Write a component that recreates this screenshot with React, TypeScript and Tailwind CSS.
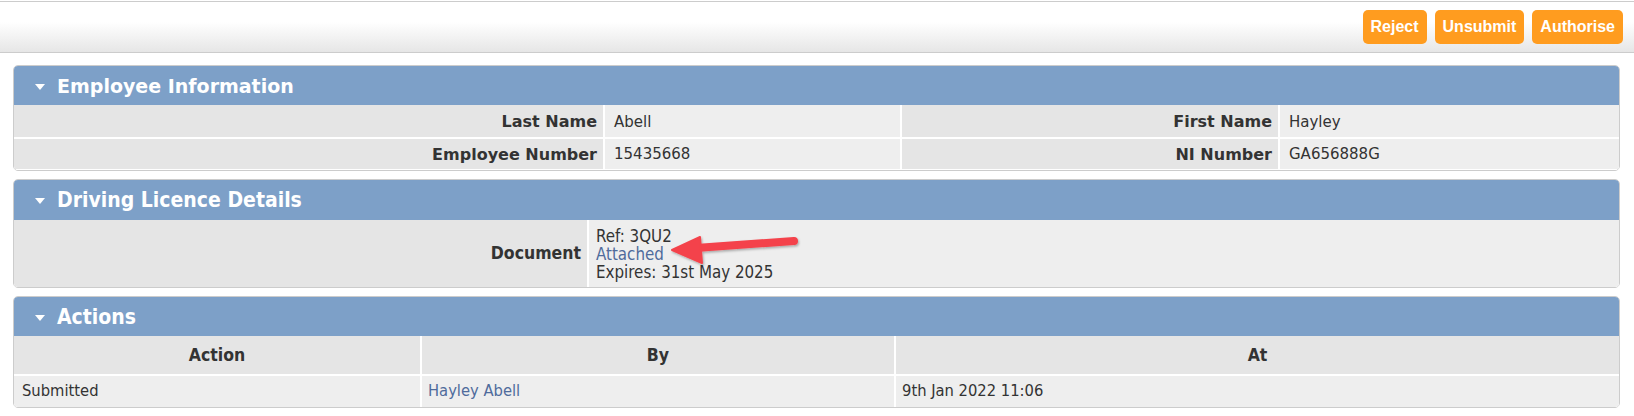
import React from "react";

const sans = "font-['DejaVu_Sans',Verdana,sans-serif]";
const cond = "font-['DejaVu_Sans_Condensed','DejaVu_Sans',sans-serif]";

function Caret() {
  return (
    <svg width="10" height="6" viewBox="0 0 10 6" className="shrink-0">
      <path d="M0 0 L10 0 L5 6 Z" fill="#ffffff" />
    </svg>
  );
}

function PanelHeader({title, condensed, tall}: { title: string; condensed?: boolean; tall?: boolean }) {
  return (
    <div
      className={`flex items-center gap-[12px] pl-[21px] pt-[2px] bg-[#7da0c8] text-white font-bold ${
        tall ? "h-[40px]" : "h-[39px]"
      } ${condensed ? `${cond} text-[21px]` : `${sans} text-[19px]`}`}
    >
      <Caret/>
      <span>{title}</span>
    </div>
  );
}

function Button({label}: { label: string }) {
  return (
    <button
      className="h-[34px] px-[8px] rounded-[5px] bg-[#ff9c1f] text-white font-bold text-[16px] font-['Liberation_Sans',Arial,sans-serif]">
      {label}
    </button>
  );
}

function Arrow() {
  return (
    <svg
      width="145"
      height="45"
      viewBox="0 0 145 45"
      className="absolute left-[660px] top-[225px] pointer-events-none"
    >
      <defs>
        <filter id="sh" x="-10%" y="-30%" width="120%" height="160%">
          <feDropShadow dx="1" dy="1.5" stdDeviation="1.2" floodColor="#000" floodOpacity="0.3"/>
        </filter>
      </defs>
      <g filter="url(#sh)">
        <path d="M134 16 L36 23" stroke="#f4434b" strokeWidth="8" strokeLinecap="round"/>
        <path d="M12 25 L40 12 L42 38 Z" fill="#f4434b" strokeLinejoin="round" stroke="#f4434b" strokeWidth="2"/>
      </g>
    </svg>
  );
}

export default function App() {
  return (
    <div className="relative w-[1634px] h-[416px] bg-white text-[#333333] overflow-hidden">
      {/* top toolbar */}
      <div
        className="h-[52px] mt-[1px] border-t border-b border-[#cccccc] bg-gradient-to-b from-white from-40% to-[#e6e6e6] flex items-start justify-end gap-[8px] pr-[11px] pt-[8px]">
        <Button label="Reject"/>
        <Button label="Unsubmit"/>
        <Button label="Authorise"/>
      </div>

      <div className="flex flex-col gap-[8px] ml-[13px] mr-[14px] mt-[12px]">
        {/* Employee information */}
        <div className="border border-[#cccccc] rounded-[5px] overflow-hidden bg-white">
          <PanelHeader title="Employee Information"/>
          <div
            className={`grid grid-cols-[589px_295px_376px_1fr] gap-[2px] bg-white pb-[1px] ${sans}`}>
            <div className="h-[32px] pt-[2px] bg-[#e5e5e5] font-bold text-[16px] flex items-center justify-end pr-[6px]">Last Name</div>
            <div className="h-[32px] pt-[2px] bg-[#eeeeee] text-[15px] flex items-center pl-[9px]">Abell</div>
            <div className="h-[32px] pt-[2px] bg-[#e5e5e5] font-bold text-[16px] flex items-center justify-end pr-[6px]">First Name</div>
            <div className="h-[32px] pt-[2px] bg-[#eeeeee] text-[15px] flex items-center pl-[9px]">Hayley</div>
            <div className="h-[30px] pt-[1px] bg-[#e5e5e5] font-bold text-[16px] flex items-center justify-end pr-[6px]">Employee Number</div>
            <div className="h-[30px] pt-[1px] bg-[#eeeeee] text-[15px] flex items-center pl-[9px]">15435668</div>
            <div className="h-[30px] pt-[1px] bg-[#e5e5e5] font-bold text-[16px] flex items-center justify-end pr-[6px]">NI Number</div>
            <div className="h-[30px] pt-[1px] bg-[#eeeeee] text-[15px] flex items-center pl-[9px]">GA656888G</div>
          </div>
        </div>

        {/* Driving licence */}
        <div className="border border-[#cccccc] rounded-[5px] overflow-hidden bg-white">
          <PanelHeader title="Driving Licence Details" condensed tall/>
          <div className={`grid grid-cols-[573px_1fr] gap-[2px] bg-white ${cond}`}>
            <div className="h-[67px] bg-[#e5e5e5] font-bold text-[17.5px] flex items-center justify-end pr-[6px]">Document</div>
            <div className="h-[67px] bg-[#eeeeee] text-[16.8px] leading-[18px] flex flex-col justify-center pl-[7px]">
              <span>Ref: 3QU2</span>
              <a className="text-[#4f6b9c]">Attached</a>
              <span>Expires: 31st May 2025</span>
            </div>
          </div>
        </div>

        {/* Actions */}
        <div className="border border-[#cccccc] rounded-[5px] overflow-hidden bg-white">
          <PanelHeader title="Actions" condensed/>
          <div className={`grid grid-cols-[406px_472px_1fr] gap-[2px] bg-white ${cond}`}>
            <div className="h-[38px] bg-[#e5e5e5] font-bold text-[17.5px] flex items-center justify-center">Action</div>
            <div className="h-[38px] bg-[#e5e5e5] font-bold text-[17.5px] flex items-center justify-center">By</div>
            <div className="h-[38px] bg-[#e5e5e5] font-bold text-[17.5px] flex items-center justify-center">At</div>
            <div className="h-[31px] bg-[#eeeeee] text-[16.4px] flex items-center pl-[8px]">Submitted</div>
            <div className="h-[31px] bg-[#eeeeee] text-[16.4px] flex items-center pl-[6px]"><a className="text-[#4f6b9c]">Hayley Abell</a></div>
            <div className="h-[31px] bg-[#eeeeee] text-[16.4px] flex items-center pl-[6px]">9th Jan 2022 11:06</div>
          </div>
        </div>
      </div>

      <Arrow/>
    </div>
  );
}
